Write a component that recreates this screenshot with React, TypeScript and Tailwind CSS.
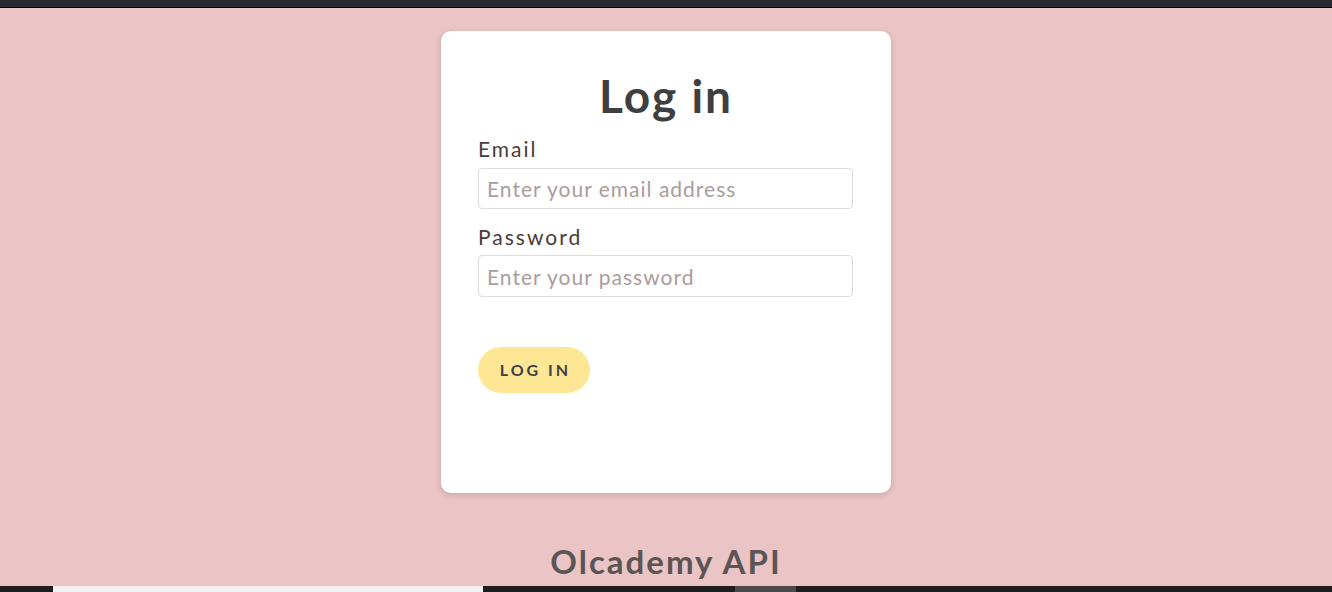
const App = () => {
  return (
    <div className="h-screen flex flex-col bg-[#ebc4c5] font-['Lato',sans-serif] overflow-hidden">
      <div className="h-[8px] bg-[#29272f] border-b border-black shrink-0" />

      <div className="flex-1 flex flex-col items-center">
        <div className="mt-[23px] w-[450px] h-[462px] bg-white rounded-[10px] shadow-[0_2px_6px_rgba(0,0,0,0.15)] px-[37px] pt-[30px]">
          <h1 className="text-center text-[46px] font-bold text-[#3f3f42] leading-[70px] tracking-[2px]">
            Log in
          </h1>
          <form className="mt-[1px]" onSubmit={(e) => e.preventDefault()}>
            <label className="block text-[21px] text-[#4a3a3a] leading-[34px] tracking-[2px]">
              Email
            </label>
            <input
              type="email"
              placeholder="Enter your email address"
              className="mt-[2px] w-[375px] h-[41px] border border-[#dcdcdc] rounded-[4px] px-[8px] text-[21px] tracking-[1px] placeholder:text-[#ab9c9c] outline-none"
            />
            <label className="block mt-[11px] text-[21px] text-[#4a3a3a] leading-[34px] tracking-[2px]">
              Password
            </label>
            <input
              type="password"
              placeholder="Enter your password"
              className="mt-[1px] w-[375px] h-[42px] border border-[#dcdcdc] rounded-[4px] px-[8px] text-[21px] tracking-[1px] placeholder:text-[#ab9c9c] outline-none"
            />
            <div className="mt-[50px]">
              <button
                type="submit"
                className="w-[112px] h-[46px] rounded-full bg-[#fee794] text-[#3d4048] text-[16px] font-bold tracking-[3px] pl-[3px]"
              >
                LOG IN
              </button>
            </div>
          </form>
        </div>

        <div className="mt-[48px] text-[33px] font-bold text-[#5b5556] leading-[40px] tracking-[2px]">
          Olcademy API
        </div>
      </div>

      <div className="h-[6px] shrink-0 flex bg-[#1e1e1e]">
        <div className="ml-[53px] w-[430px] bg-[#f0f0f0]" />
        <div className="ml-[252px] w-[61px] bg-[#4a4a4a]" />
      </div>
    </div>
  );
};

export default App;
